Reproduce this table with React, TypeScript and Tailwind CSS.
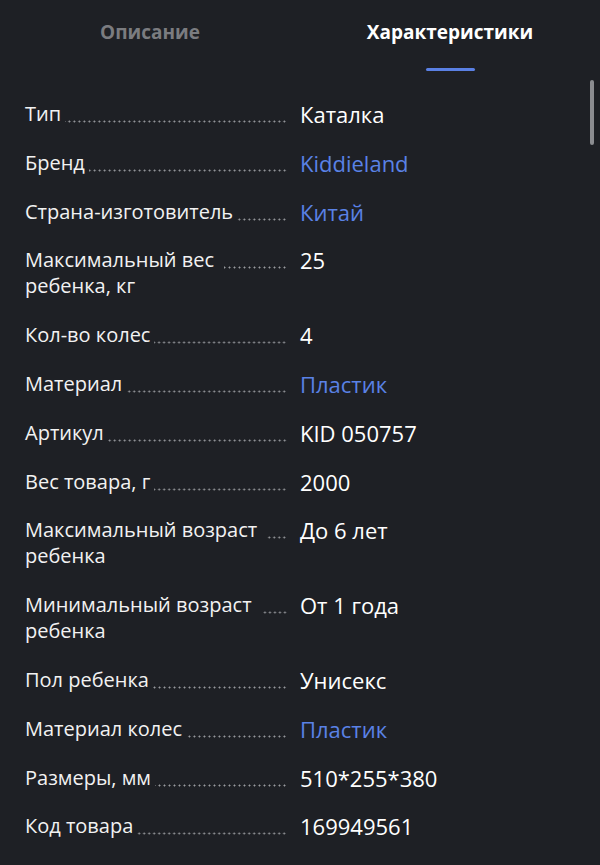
import * as React from "react";

type Row = { label: string[]; value: string; link?: boolean };

const rows: Row[] = [
  { label: ["Тип"], value: "Каталка" },
  { label: ["Бренд"], value: "Kiddieland", link: true },
  { label: ["Страна-изготовитель"], value: "Китай", link: true },
  { label: ["Максимальный вес", "ребенка, кг"], value: "25" },
  { label: ["Кол-во колес"], value: "4" },
  { label: ["Материал"], value: "Пластик", link: true },
  { label: ["Артикул"], value: "KID 050757" },
  { label: ["Вес товара, г"], value: "2000" },
  { label: ["Максимальный возраст", "ребенка"], value: "До 6 лет" },
  { label: ["Минимальный возраст", "ребенка"], value: "От 1 года" },
  { label: ["Пол ребенка"], value: "Унисекс" },
  { label: ["Материал колес"], value: "Пластик", link: true },
  { label: ["Размеры, мм"], value: "510*255*380" },
  { label: ["Код товара"], value: "169949561" },
];

const SpecRow = ({ row }: { row: Row }) => {
  const [first, ...rest] = row.label;
  return (
    <div className="flex">
      <div className="w-[262px] shrink-0 text-[20px] leading-[26px] text-[#f2f2f2] font-['Open_Sans',sans-serif]">
        <div className="flex">
          <span className="whitespace-nowrap">{first}</span>
          <div
            className={`flex-1 self-end mb-[4px] h-[3px] bg-[radial-gradient(circle,#9a9ca1_0.8px,transparent_1.2px)] bg-[length:5px_3px] bg-repeat-x bg-right ${
              rest.length ? "ml-[10px]" : "ml-[4px]"
            }`}
          />
        </div>
        {rest.map((l) => (
          <div key={l} className="whitespace-nowrap">
            {l}
          </div>
        ))}
      </div>
      <div
        className={`ml-[13px] text-[22px] leading-[26px] font-['Open_Sans',sans-serif] ${
          row.link ? "text-[#5a82e6]" : "text-white"
        }`}
      >
        {row.value}
      </div>
    </div>
  );
};

export default function App() {
  return (
    <div className="relative w-[600px] h-[865px] overflow-hidden bg-[#1e2025]">
      <div className="grid grid-cols-2 font-['Open_Sans',sans-serif] font-bold text-[19px] leading-[24px]">
        <div className="flex flex-col items-center pt-[20px]">
          <span className="text-[#7b7c80]">Описание</span>
        </div>
        <div className="flex flex-col items-center pt-[20px]">
          <span className="text-white">Характеристики</span>
          <div className="mt-[24px] w-[49px] h-[3px] rounded-full bg-[#5a80e4]" />
        </div>
      </div>

      <div className="mt-[30px] pl-[25px] flex flex-col gap-[22.8px]">
        {rows.map((r) => (
          <SpecRow key={r.label.join(" ")} row={r} />
        ))}
      </div>

      <div className="absolute left-[590px] top-[80px] w-[4px] h-[65px] rounded-full bg-[#8b8c90]" />
    </div>
  );
}
